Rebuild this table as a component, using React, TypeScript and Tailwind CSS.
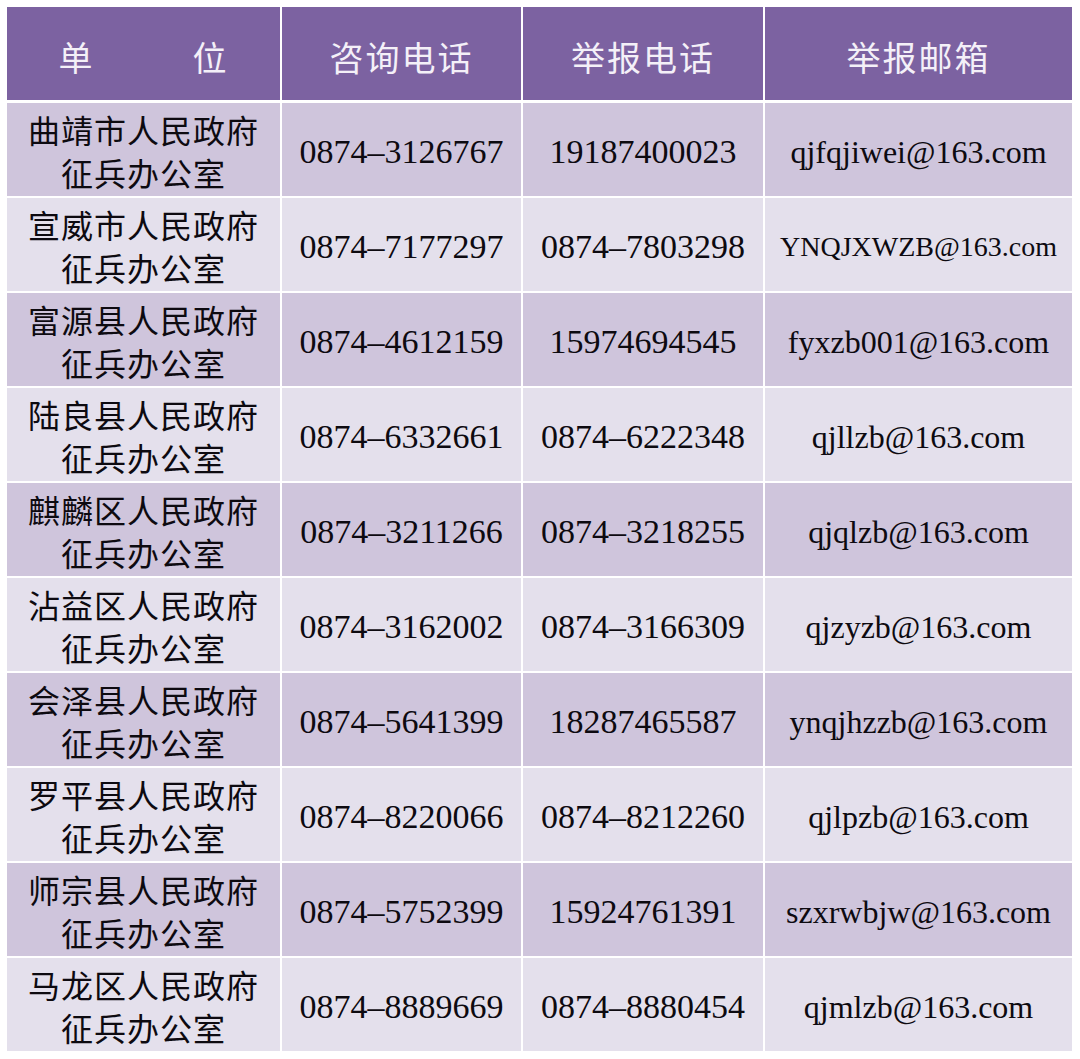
import React from 'react';

// 单位 / 咨询电话 / 举报电话 / 举报邮箱
interface Fila {
  unidad: string;
  consulta: string;
  denuncia: string;
  correo: string;
  correoPequeno?: boolean;
}

const filas: Fila[] = [
  { unidad: '曲靖市人民政府', consulta: '0874–3126767', denuncia: '19187400023', correo: 'qjfqjiwei@163.com' },
  { unidad: '宣威市人民政府', consulta: '0874–7177297', denuncia: '0874–7803298', correo: 'YNQJXWZB@163.com', correoPequeno: true },
  { unidad: '富源县人民政府', consulta: '0874–4612159', denuncia: '15974694545', correo: 'fyxzb001@163.com' },
  { unidad: '陆良县人民政府', consulta: '0874–6332661', denuncia: '0874–6222348', correo: 'qjllzb@163.com' },
  { unidad: '麒麟区人民政府', consulta: '0874–3211266', denuncia: '0874–3218255', correo: 'qjqlzb@163.com' },
  { unidad: '沾益区人民政府', consulta: '0874–3162002', denuncia: '0874–3166309', correo: 'qjzyzb@163.com' },
  { unidad: '会泽县人民政府', consulta: '0874–5641399', denuncia: '18287465587', correo: 'ynqjhzzb@163.com' },
  { unidad: '罗平县人民政府', consulta: '0874–8220066', denuncia: '0874–8212260', correo: 'qjlpzb@163.com' },
  { unidad: '师宗县人民政府', consulta: '0874–5752399', denuncia: '15924761391', correo: 'szxrwbjw@163.com' },
  { unidad: '马龙区人民政府', consulta: '0874–8889669', denuncia: '0874–8880454', correo: 'qjmlzb@163.com' },
];

const cjk = "font-['Noto_Sans_CJK_SC',sans-serif]";
const serif = "font-['Liberation_Serif','Times_New_Roman',serif]";

export default function App() {
  return (
    <div className="w-[1080px] h-[1059px] bg-white pt-[7px] pl-[7px]">
      <div className="flex flex-col w-[1065px]">
        {/* Cabecera */}
        <div className={`flex gap-[2px] h-[93px] text-[#f4f0f8] text-[34px] tracking-[2px] ${cjk}`}>
          <div className="w-[273px] bg-[#7c62a1] flex items-center justify-center pt-[6px]">
            <div className="w-[170px] flex justify-between">
              <span>单</span>
              <span>位</span>
            </div>
          </div>
          <div className="w-[239px] bg-[#7c62a1] flex items-center justify-center pt-[6px]">咨询电话</div>
          <div className="w-[240px] bg-[#7c62a1] flex items-center justify-center pt-[6px]">举报电话</div>
          <div className="w-[307px] bg-[#7c62a1] flex items-center justify-center pt-[6px]">举报邮箱</div>
        </div>

        {/* Filas */}
        <div className="flex flex-col gap-[2px] mt-[3px]">
          {filas.map((fila, i) => {
            const fondo = i % 2 === 0 ? 'bg-[#cfc5dc]' : 'bg-[#e4e0ec]';
            return (
              <div key={fila.unidad} className="flex gap-[2px] h-[93px] text-[#0d0a10]">
                <div className={`w-[273px] ${fondo} flex flex-col items-center justify-center pt-[2px] text-[32px] leading-[43px] tracking-[1px] ${cjk}`}>
                  <span>{fila.unidad}</span>
                  <span>征兵办公室</span>
                </div>
                <div className={`w-[239px] ${fondo} flex items-center justify-center pt-[4px] text-[34px] ${serif}`}>
                  {fila.consulta}
                </div>
                <div className={`w-[240px] ${fondo} flex items-center justify-center pt-[4px] text-[34px] ${serif}`}>
                  {fila.denuncia}
                </div>
                <div
                  className={`w-[307px] ${fondo} flex items-center justify-center pt-[4px] ${serif} ${
                    fila.correoPequeno ? 'text-[28px]' : 'text-[32px]'
                  }`}
                >
                  {fila.correo}
                </div>
              </div>
            );
          })}
        </div>
      </div>
    </div>
  );
}
